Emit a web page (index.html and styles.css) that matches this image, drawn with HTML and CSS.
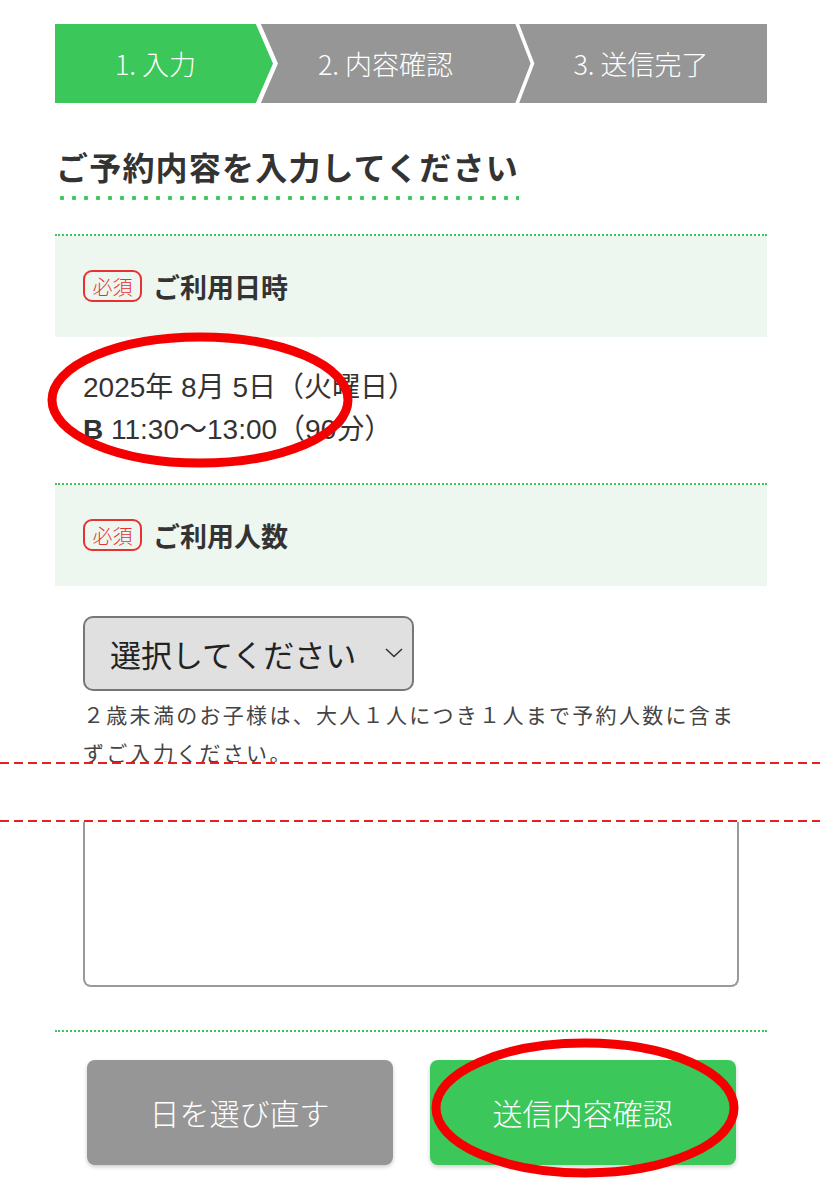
FILE: index.html
```html
<!DOCTYPE html>
<html lang="ja">

<head>
    <meta charset="UTF-8">
    <meta name="viewport" content="width=device-width, initial-scale=1.0">
    <title>ご予約内容の入力</title>
    <link rel="stylesheet" href="styles.css">
</head>

<body>

    <div class="page">

        <!-- steps -->
        <ol class="steps">
            <li class="step step-current">
                1. 入力
                <svg class="step-arrow" width="24" height="79" viewBox="0 0 24 79">
                    <polygon points="0,0 17.5,39.5 0,79" fill="#3cc75a" />
                    <polyline points="1.5,-2 19.5,39.5 1.5,81" fill="none" stroke="#fff" stroke-width="4.5" />
                </svg>
            </li>
            <li class="step">
                2. 内容確認
                <svg class="step-arrow" width="24" height="79" viewBox="0 0 24 79">
                    <polyline points="1.5,-2 17.5,39.5 1.5,81" fill="none" stroke="#fff" stroke-width="3.5" />
                </svg>
            </li>
            <li class="step">3. 送信完了</li>
        </ol>

        <h2 class="page-title">ご予約内容を入力してください</h2>

        <div class="form-section">
            <div class="form-label">
                <span class="badge">必須</span>
                <span class="label-text">ご利用日時</span>
            </div>
            <div class="form-body date-body">
                <p>2025年 8月 5日（火曜日）</p>
                <p><b>B</b> 11:30〜13:00（90分）</p>
            </div>
        </div>

        <div class="form-section">
            <div class="form-label">
                <span class="badge">必須</span>
                <span class="label-text">ご利用人数</span>
            </div>
            <div class="form-body people-body">
                <div class="select">
                    <span>選択してください</span>
                    <svg width="18" height="10" viewBox="0 0 18 10">
                        <polyline points="1,1 9,8.5 17,1" fill="none" stroke="#333" stroke-width="1.6" />
                    </svg>
                </div>
                <div class="note-clip">
                    <p class="note">２歳未満のお子様は、大人１人につき１人まで予約人数に含まずご入力ください。</p>
                </div>

                <!-- omitted part of the page -->
                <div class="cut"></div>

                <div class="textarea-tail"></div>
            </div>
        </div>

        <div class="actions">
            <a href="#" class="btn btn-back">日を選び直す</a>
            <a href="#" class="btn btn-next">送信内容確認</a>
        </div>

    </div>

    <!-- red marks drawn over the screenshot -->
    <svg class="marks" width="820" height="1200" viewBox="0 0 820 1200">
        <ellipse cx="200" cy="400" rx="148" ry="63" fill="none" stroke="#f50000" stroke-width="9" />
        <ellipse cx="585" cy="1108" rx="149" ry="65" fill="none" stroke="#f50000" stroke-width="9" />
    </svg>

</body>

</html>
```

FILE: styles.css
```css
body {
    font-family: "Liberation Sans", "Noto Sans CJK JP", sans-serif;
    background-color: #fff;
    color: #333;
    margin: 0;
    padding: 0;
    position: relative;
    width: 820px;
    height: 1200px;
    overflow: hidden;
}

p {
    margin: 0;
}

.page {
    padding: 24px 53px 0 55px;
}

/* steps */

.steps {
    list-style-type: none;
    margin: 0;
    padding: 0;
    display: flex;
    height: 79px;
    background-color: #969696;
}

.step {
    position: relative;
    display: flex;
    align-items: center;
    justify-content: center;
    color: #fff;
    font-family: "Noto Sans CJK JP", sans-serif;
    font-weight: 300;
    font-size: 27px;
    width: 252px;
}

.step:nth-child(1) {
    width: 201px;
}

.step:nth-child(2) {
    width: 259px;
}

.step-current {
    background-color: #3cc75a;
}

.step-arrow {
    position: absolute;
    left: 100%;
    top: 0;
    overflow: visible;
    z-index: 1;
}

/* title */

.page-title {
    display: inline-block;
    margin: 43px 0 0 0;
    padding: 0 0 12px 1px;
    font-family: "Noto Sans CJK JP", sans-serif;
    font-size: 32px;
    font-weight: 700;
    letter-spacing: 1.2px;
    line-height: 41.6px;
    color: #333;
    background-image: radial-gradient(circle, #3cc75a 2px, transparent 2.4px);
    background-size: 12px 4px;
    background-position: 1px bottom;
    background-repeat: repeat-x;
}

/* sections */

.form-section {
    border-top: 2px dotted #3cc75a;
    margin-top: 34px;
}

.form-section + .form-section {
    margin-top: 0;
}

.form-label {
    display: flex;
    align-items: center;
    gap: 11px;
    height: 101px;
    padding-left: 28px;
    background-color: #edf7ef;
}

.badge {
    display: inline-flex;
    align-items: center;
    justify-content: center;
    box-sizing: border-box;
    width: 59px;
    height: 32px;
    border: 2px solid #e53232;
    border-radius: 9px;
    color: #e53232;
    font-family: "Noto Sans CJK JP", sans-serif;
    font-weight: 300;
    font-size: 20px;
}

.label-text {
    font-family: "Noto Sans CJK JP", sans-serif;
    font-size: 27px;
    font-weight: 700;
    color: #333;
}

.form-body {
    padding: 30px 28px 0 28px;
}

.date-body {
    padding-bottom: 32px;
    font-size: 28px;
    line-height: 42px;
}

.people-body {
    padding-bottom: 43px;
}

.select {
    display: flex;
    align-items: center;
    justify-content: space-between;
    box-sizing: border-box;
    width: 331px;
    height: 75px;
    padding: 0 9px 0 25px;
    border: 2px solid #777;
    border-radius: 10px;
    background-color: #e0e0e0;
    font-family: "Noto Sans CJK JP", sans-serif;
    font-size: 31px;
    color: #222;
}

.note-clip {
    height: 71px;
    overflow: hidden;
}

.note {
    padding-top: 4px;
    font-family: "Noto Sans CJK JP", sans-serif;
    font-size: 21px;
    letter-spacing: 2.3px;
    line-height: 38px;
    color: #444;
}

.cut {
    height: 60px;
    margin: 0 -81px 0 -83px;
    background-image:
        repeating-linear-gradient(90deg, #e62020 0 9px, transparent 9px 14px),
        repeating-linear-gradient(90deg, #e62020 0 9px, transparent 9px 14px);
    background-size: 100% 2px, 100% 2px;
    background-position: 0 0, 0 100%;
    background-repeat: no-repeat;
}

.textarea-tail {
    height: 163px;
    border: 2px solid #999;
    border-top: none;
    border-radius: 0 0 8px 8px;
}

/* buttons */

.actions {
    display: flex;
    justify-content: center;
    gap: 37px;
    padding-top: 28px;
    border-top: 2px dotted #3cc75a;
}

.btn {
    display: flex;
    align-items: center;
    justify-content: center;
    width: 306px;
    height: 105px;
    border-radius: 8px;
    box-shadow: 0 2px 4px rgba(0, 0, 0, 0.2);
    color: #fff;
    text-decoration: none;
    font-family: "Noto Sans CJK JP", sans-serif;
    font-weight: 300;
    font-size: 30px;
}

.btn-back {
    background-color: #969696;
}

.btn-next {
    background-color: #3cc75a;
}

.marks {
    position: absolute;
    top: 0;
    left: 0;
    pointer-events: none;
}
```
